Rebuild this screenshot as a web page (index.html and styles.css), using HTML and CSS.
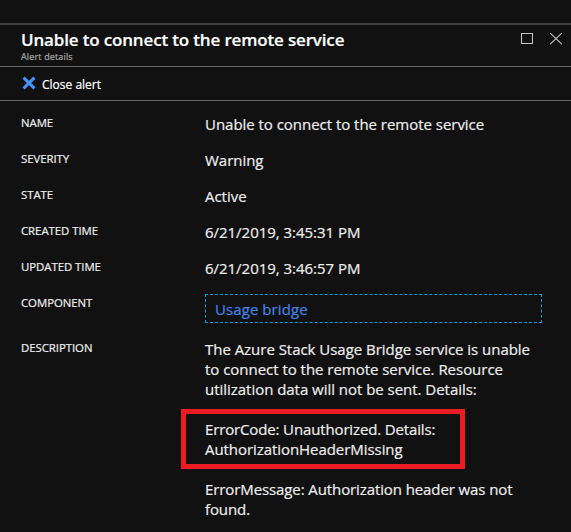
FILE: index.html
```html
<!DOCTYPE html>
<html lang="en">
<head>
<meta charset="utf-8">
<title>Alert details</title>
<link rel="stylesheet" href="styles.css">
</head>
<body>
<main class="blade">
  <header class="blade-header">
    <div class="heading">
      <h1 class="title">Unable to connect to the remote service</h1>
      <p class="subtitle">Alert details</p>
    </div>
    <div class="window-actions">
      <svg class="icon" width="14" height="14" viewBox="0 0 14 14" role="img" aria-label="Maximize"><path d="M1.5 1.5h11v10h-11z"/></svg>
      <svg class="icon" width="14" height="14" viewBox="0 0 14 14" role="img" aria-label="Close"><path d="M1.2 1.2 12.8 12.2M12.8 1.2 1.2 12.2"/></svg>
    </div>
  </header>
  <div class="toolbar">
    <svg class="close-icon" width="14" height="14" viewBox="0 0 14 14" aria-hidden="true"><path d="M1.6 1.6 12.4 12.4M12.4 1.6 1.6 12.4"/></svg>
    <span class="close-label">Close alert</span>
  </div>
  <dl class="details">
    <dt>NAME</dt><dd>Unable to connect to the remote service</dd>
    <dt>SEVERITY</dt><dd>Warning</dd>
    <dt>STATE</dt><dd>Active</dd>
    <dt>CREATED TIME</dt><dd>6/21/2019, 3:45:31 PM</dd>
    <dt>UPDATED TIME</dt><dd>6/21/2019, 3:46:57 PM</dd>
    <dt>COMPONENT</dt><dd><a class="component">Usage bridge</a></dd>
    <dt>DESCRIPTION</dt>
    <dd class="description">
      <p>The Azure Stack Usage Bridge service is unable<br>to connect to the remote service. Resource<br>utilization data will not be sent. Details:</p>
      <p class="error-code">ErrorCode: Unauthorized. Details:<br><span class="error-name">AuthorizationHeaderMissing</span></p>
      <p class="error-message">ErrorMessage: Authorization header was not<br>found.</p>
    </dd>
  </dl>
</main>
</body>
</html>
```
FILE: styles.css
```css
* { box-sizing: border-box; margin: 0; padding: 0; }

body {
  height: 532px;
  overflow: hidden;
  background: #111;
  color: #eee;
  font-family: "Open Sans", "Noto Sans", sans-serif;
  -webkit-text-stroke: 0.2px;
}

.blade { padding-top: 23px; }

.blade-header {
  display: flex;
  justify-content: space-between;
  height: 44px;
  padding: 4px 8px 0 21px;
  border-top: 2px solid #3d3d3d;
  border-bottom: 1px solid #666;
}

.title {
  font-size: 17px;
  font-weight: 600;
  line-height: 22px;
  letter-spacing: -0.16px;
  color: #fff;
  white-space: nowrap;
}

.subtitle {
  font-size: 9px;
  line-height: 12px;
  letter-spacing: 0.15px;
  color: #aaa;
}

.window-actions { display: flex; gap: 15px; padding-top: 3px; }

.icon { fill: none; stroke: #c4c4c4; stroke-width: 1.1; }

.toolbar {
  display: flex;
  align-items: center;
  gap: 6px;
  height: 34px;
  padding-left: 22px;
  border-bottom: 1px solid #666;
}

.close-icon {
  margin-top: -1px;
  stroke: #4894fe;
  stroke-width: 3;
}

.close-label {
  padding-top: 2px;
  font-size: 12px;
  line-height: 18px;
  color: #fff;
}

.details {
  display: grid;
  grid-template-columns: 184px 337px;
  grid-template-rows: repeat(5, 36px) 45px auto;
  padding: 13px 0 0 21px;
  font-size: 15px;
  line-height: 20px;
  letter-spacing: -0.03px;
}

dt { margin-top: -1px; font-size: 11.4px; letter-spacing: -0.05px; }

.component {
  display: block;
  height: 29px;
  padding: 4px 9px;
  border: 1px dashed #00a3d1;
  color: #4384e6;
  letter-spacing: 0.08px;
}

.description { white-space: nowrap; }

.error-code {
  width: 284px;
  height: 60px;
  margin: 10px 0 0 -24px;
  padding: 5px 19px 0;
  border: 5px solid #ed1c24;
  letter-spacing: -0.14px;
}

.error-name { letter-spacing: -0.06px; }

.error-message { margin-top: 10px; letter-spacing: -0.1px; }
```
